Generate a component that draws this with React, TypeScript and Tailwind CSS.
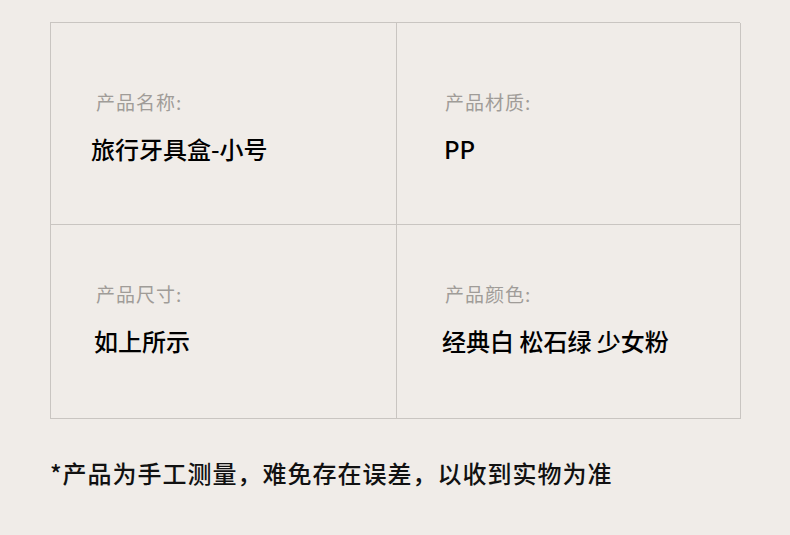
const font = { fontFamily: '"Noto Sans CJK SC", "Noto Sans", sans-serif' };

const specs = [
  { label: '产品名称:', value: '旅行牙具盒-小号', labelX: 'pl-[45px]', valueX: 'pl-[40px]', top: 'pt-[66px]' },
  { label: '产品材质:', value: 'PP', labelX: 'pl-[48px]', valueX: 'pl-[47px]', top: 'pt-[66px]' },
  { label: '产品尺寸:', value: '如上所示', labelX: 'pl-[45px]', valueX: 'pl-[43px]', top: 'pt-[56px]' },
  { label: '产品颜色:', value: '经典白 松石绿 少女粉', labelX: 'pl-[48px]', valueX: 'pl-[45px]', top: 'pt-[56px]' },
];

export default function App() {
  return (
    <div className="w-[790px] h-[535px] bg-[#f0ece8] pt-[22px] pl-[50px]" style={font}>
      <div className="w-[690px] grid grid-cols-[346px_344px] grid-rows-[202px_194px] border-l border-t border-[#c9c5c1]">
        {specs.map((s) => (
          <div key={s.label} className={`${s.top} border-r border-b border-[#c9c5c1]`}>
            <p className={`${s.labelX} text-[19px] leading-[26px] text-[#a09c98] tracking-[1px]`}>{s.label}</p>
            <p className={`${s.valueX} mt-[19px] text-[24px] leading-[30px] font-medium text-black`}>{s.value}</p>
          </div>
        ))}
      </div>
      <p className="mt-[39px] text-[24px] leading-[30px] font-medium text-[#111] tracking-[1px]">
        *产品为手工测量，难免存在误差，以收到实物为准
      </p>
    </div>
  );
}
